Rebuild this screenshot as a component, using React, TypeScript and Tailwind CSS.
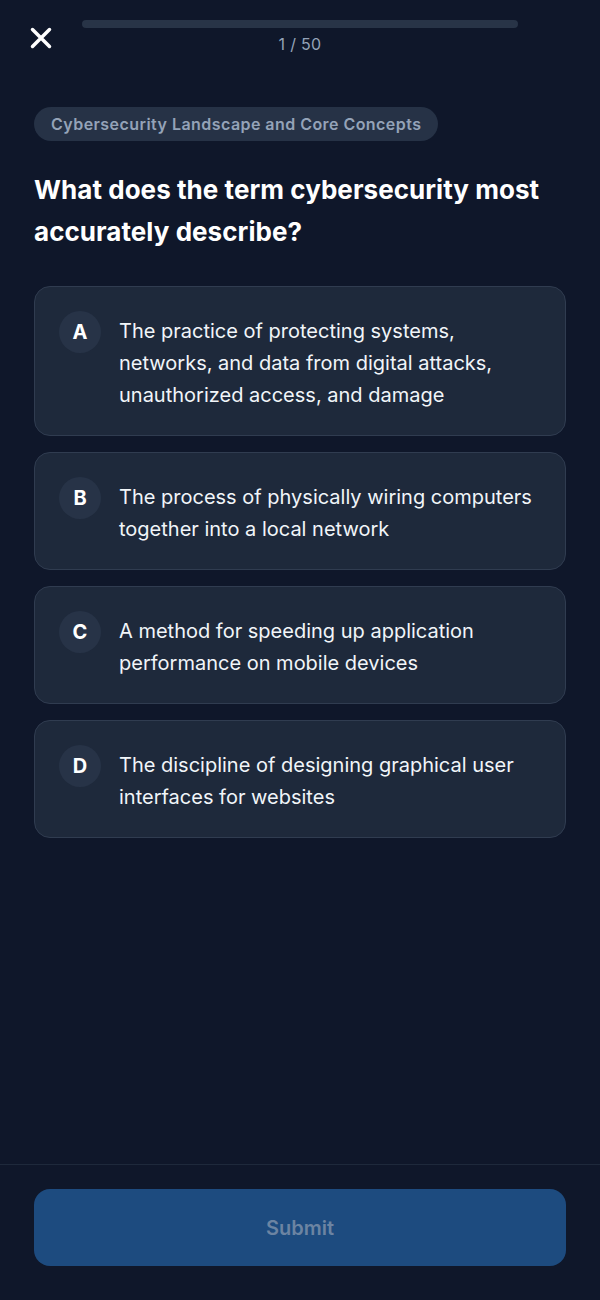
const options = [
  {
    letter: "A",
    text: "The practice of protecting systems, networks, and data from digital attacks, unauthorized access, and damage",
  },
  {
    letter: "B",
    text: "The process of physically wiring computers together into a local network",
  },
  {
    letter: "C",
    text: "A method for speeding up application performance on mobile devices",
  },
  {
    letter: "D",
    text: "The discipline of designing graphical user interfaces for websites",
  },
];

function CloseIcon() {
  return (
    <svg width="22" height="22" viewBox="0 0 22 22" fill="none">
      <path
        d="M2.5 2.5 19.5 19.5M19.5 2.5 2.5 19.5"
        stroke="#ffffff"
        strokeWidth="3.5"
        strokeLinecap="round"
      />
    </svg>
  );
}

export default function App() {
  return (
    <div className="min-h-screen bg-[#0f172a] flex flex-col font-['Inter','Noto_Sans',sans-serif] text-white">
      {/* Header */}
      <div className="flex items-start gap-[30px] px-[30px]">
        <button className="mt-[27px] w-[22px] h-[22px] shrink-0">
          <CloseIcon />
        </button>
        <div className="flex-1 flex flex-col items-center pt-5">
          <div className="w-full h-2 rounded-full bg-[#283447]" />
          <div className="mt-1 text-[16px] leading-6 text-[#94a3b8] tracking-[0.3px]">1 / 50</div>
        </div>
        <div className="w-[22px] shrink-0" />
      </div>

      {/* Body */}
      <div className="flex-1 px-[34px] pt-[51px]">
        <span className="inline-flex items-center h-[34px] px-[17px] rounded-full bg-[#263246] text-[16px] font-semibold text-[#94a3b8] tracking-[0.45px]">
          Cybersecurity Landscape and Core Concepts
        </span>

        <h1 className="mt-[28px] text-[26px] leading-[42px] font-bold text-white tracking-[0.05px]">
          What does the term cybersecurity most accurately describe?
        </h1>

        <div className="mt-[33px] flex flex-col gap-4">
          {options.map((opt) => (
            <button
              key={opt.letter}
              className="flex items-start gap-[18px] w-full text-left p-6 rounded-2xl bg-[#1e293b] border border-[#303c50]"
            >
              <span className="w-[42px] h-[42px] shrink-0 rounded-full bg-[#273347] flex items-center justify-center text-[20px] font-bold text-white">
                {opt.letter}
              </span>
              <span className="pt-1 text-[20px] leading-8 text-[#f1f5f9]">
                {opt.text}
              </span>
            </button>
          ))}
        </div>
      </div>

      {/* Footer */}
      <div className="border-t border-[#1e293b] px-[34px] pt-6 pb-[34px]">
        <button
          disabled
          className="w-full h-[77px] rounded-2xl bg-[#1d4b7f] text-[20px] font-semibold text-[#6c84a2]"
        >
          Submit
        </button>
      </div>
    </div>
  );
}
